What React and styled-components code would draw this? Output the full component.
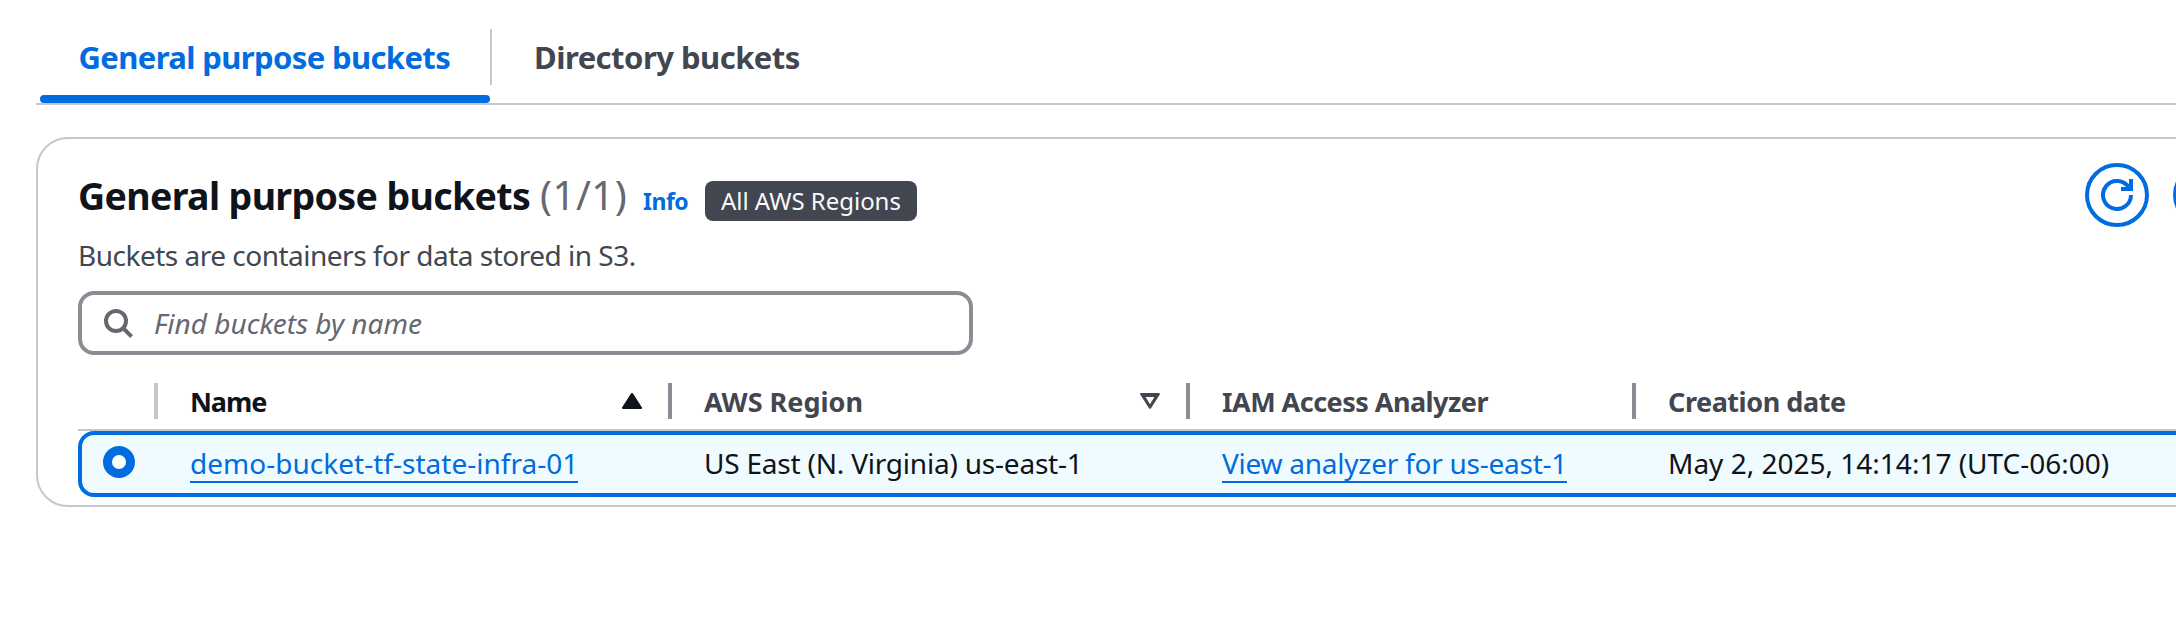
import React from 'react';
import styled, { createGlobalStyle } from 'styled-components';

const blue = '#006ce0';
const line = '#c6c6cd';
const grey = '#424650';
const ink = '#0f141a';

const Global = createGlobalStyle`
  * { box-sizing: border-box; }
  html, body { margin: 0; background: #fff; overflow: hidden; }
  body {
    font-family: "Noto Sans", "Open Sans", sans-serif;
    font-size: 28px;
    line-height: 40px;
    color: ${ink};
  }
`;

const Page = styled.main`
  height: 624px;
  padding-left: 36px;
  overflow: hidden;
`;

const Text = styled.span`
  letter-spacing: ${(p) => p.$ls || 0}px;
  white-space: nowrap;
`;

const TabBar = styled.nav`
  display: flex;
  height: 105px;
  padding-left: 4px;
  border-bottom: 2px solid ${line};
`;

const Tab = styled.div`
  display: flex;
  flex-direction: column;
  justify-content: space-between;
  width: ${(p) => p.$width}px;
  padding-top: 37px;
  font-size: 31px;
  font-weight: 700;
  color: ${(p) => (p.$active ? blue : grey)};
`;

const TabLabel = styled(Text)`
  padding-left: ${(p) => p.$pad}px;
`;

const TabMarker = styled.div`
  height: 8px;
  border-radius: 4px;
  background: ${blue};
`;

const TabDivider = styled.div`
  width: 2px;
  height: 56px;
  margin-top: 29px;
  background: ${line};
`;

const Card = styled.section`
  width: 2400px;
  height: 370px;
  margin-top: 32px;
  padding: 24px 40px 0;
  border: 2px solid ${line};
  border-radius: 32px;
`;

const Header = styled.header`
  display: flex;
  height: 69px;
`;

const TitleGroup = styled.div`
  display: flex;
  width: 2007px;
  align-items: baseline;
`;

const Title = styled.h2`
  width: 462px;
  margin: 7px 0 0;
  font-size: 37.5px;
  line-height: 52px;
  font-weight: 700;
  white-space: nowrap;
  letter-spacing: -0.64px;
`;

const Counter = styled(Text)`
  width: 103px;
  font-size: 40px;
  color: #656871;
`;

const Info = styled(Text)`
  width: 62px;
  font-size: 23px;
  font-weight: 700;
  color: ${blue};
`;

const Badge = styled(Text)`
  width: 212px;
  padding-left: 16px;
  border-radius: 8px;
  background: ${grey};
  color: #f9f9fa;
  font-size: 24px;
  line-height: 40px;
`;

const RoundButton = styled.button`
  display: flex;
  align-items: center;
  justify-content: center;
  flex: none;
  width: 64px;
  height: 64px;
  margin-right: 24px;
  padding: 0;
  border: 4px solid ${blue};
  border-radius: 32px;
  background: #fff;
`;

const Description = styled.p`
  margin: 3px 0 0;
  color: ${grey};
  letter-spacing: -0.5px;
`;

const Search = styled.div`
  display: flex;
  align-items: center;
  width: 895px;
  height: 64px;
  margin-top: 16px;
  padding-left: 20px;
  border: 4px solid #8c8c94;
  border-radius: 16px;
  color: #656871;
  font-style: italic;

  svg { margin-right: 18px; }
`;

const HeadRow = styled.div`
  display: flex;
  width: 2240px;
  height: 76px;
  border-bottom: 2px solid ${line};
  padding-top: 28px;
`;

const HeadCell = styled.div`
  display: flex;
  justify-content: space-between;
  width: ${(p) => p.$width}px;
  height: 36px;
  padding: 0 ${(p) => (p.$last ? 0 : 26)}px 0 ${(p) => p.$pad || 0}px;
  border-right: ${(p) => (p.$last ? 0 : 4)}px solid ${(p) => p.$rule || '#8c8c94'};
  font-size: 27px;
  font-weight: 700;
  line-height: 38px;
  color: ${(p) => (p.$sorted ? ink : grey)};

  svg { margin-top: 10px; flex: none; }
`;

const DataRow = styled.div`
  display: flex;
  width: 2240px;
  height: 66px;
  border: 4px solid ${blue};
  border-radius: 16px;
  background: #f0fbff;
`;

const Cell = styled.div`
  width: ${(p) => p.$width}px;
  padding-top: 8px;
`;

const Link = styled.a`
  display: inline-block;
  height: 40px;
  line-height: 40px;
  border-bottom: 2px solid ${blue};
  color: ${blue};
  white-space: nowrap;
  letter-spacing: ${(p) => p.$ls}px;
`;

const Radio = styled.div`
  width: 32px;
  height: 32px;
  margin: 3px 0 0 21px;
  border: 9.5px solid ${blue};
  border-radius: 50%;
  background: #fff;
`;

export default function App() {
  return (
    <Page>
      <Global />
      <TabBar>
        <Tab $active $width={450}>
          <TabLabel $pad={38.5} $ls={-0.62}>General purpose buckets</TabLabel>
          <TabMarker />
        </Tab>
        <TabDivider />
        <Tab $width={350}>
          <TabLabel $pad={42} $ls={-0.52}>Directory buckets</TabLabel>
        </Tab>
      </TabBar>

      <Card>
        <Header>
          <TitleGroup>
            <Title>General purpose buckets</Title>
            <Counter $ls={0.5}>(1/1)</Counter>
            <Info $ls={-0.5}>Info</Info>
            <Badge $ls={-0.03}>All AWS Regions</Badge>
          </TitleGroup>
          <RoundButton aria-label="Refresh">
            <svg width="32" height="32" viewBox="0 0 32 32" fill="none" stroke={blue} strokeWidth="4">
              <path d="M30 16A14 14 0 1 1 28 8.8" />
              <path d="M30 0V10H20" />
            </svg>
          </RoundButton>
          <RoundButton aria-label="Copy ARN" />
        </Header>
        <Description>Buckets are containers for data stored in S3.</Description>
        <Search>
          <svg width="34" height="32" viewBox="0 0 34 32" fill="none" stroke="#656871" strokeWidth="4">
            <circle cx="14" cy="14" r="10" />
            <path d="M21 21L29.6 29.6" />
          </svg>
          <Text>Find buckets by name</Text>
        </Search>

        <HeadRow>
          <HeadCell $width={80} $rule={line} />
          <HeadCell $width={514} $pad={32} $sorted>
            <Text $ls={-1.1}>Name</Text>
            <svg width="20" height="16" viewBox="0 0 20 16">
              <path d="M10 1.2L18.8 14.8H1.2Z" fill={ink} stroke={ink} strokeWidth="2.4" strokeLinejoin="round" />
            </svg>
          </HeadCell>
          <HeadCell $width={518} $pad={32}>
            <Text>AWS Region</Text>
            <svg width="20" height="16" viewBox="0 0 20 16">
              <path
                d="M1 0H19Q20.4 0.4 19.6 1.8L11 15.2Q10 16.4 9 15.2L0.4 1.8Q-0.4 0.4 1 0Z M5.6 4H14.4L10 11.2Z"
                fill={grey}
                fillRule="evenodd"
              />
            </svg>
          </HeadCell>
          <HeadCell $width={446} $pad={32}>
            <Text $ls={-0.52}>IAM Access Analyzer</Text>
          </HeadCell>
          <HeadCell $last $width={500} $pad={32}>
            <Text $ls={-0.45}>Creation date</Text>
          </HeadCell>
        </HeadRow>
        <DataRow>
          <Cell $width={108}>
            <Radio />
          </Cell>
          <Cell $width={514}>
            <Link $ls={0.02}>demo-bucket-tf-state-infra-01</Link>
          </Cell>
          <Cell $width={518}>
            <Text $ls={-0.21}>US East (N. Virginia) us-east-1</Text>
          </Cell>
          <Cell $width={446}>
            <Link $ls={-0.25}>View analyzer for us-east-1</Link>
          </Cell>
          <Cell $width={480}>
            <Text>May 2, 2025, 14:14:17 (UTC-06:00)</Text>
          </Cell>
        </DataRow>
      </Card>
    </Page>
  );
}
